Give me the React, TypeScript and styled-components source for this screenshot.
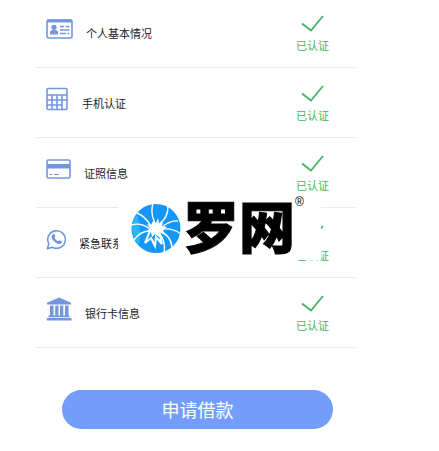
import React from "react";
import styled, { createGlobalStyle } from "styled-components";

const GlobalStyle = createGlobalStyle`
  body {
    margin: 0;
    background: #fff;
    font-family: "Noto Sans CJK SC", "Noto Sans", sans-serif;
  }
`;

const Page = styled.main`
  position: relative;
  padding: 0 84px 20px 36px;
  overflow: hidden;
`;

const List = styled.ul`
  list-style: none;
  margin: -2px 0 0;
  padding: 0;
`;

const Row = styled.li`
  display: flex;
  align-items: center;
  box-sizing: border-box;
  min-height: 70px;
  padding: 0 26px 0 10px;
  border-bottom: 1px solid #e9e9e9;
`;

const Icon = styled.svg<{ $width: number }>`
  flex: none;
  width: ${(p) => p.$width}px;
  height: 24px;
  margin: 0 13px 8px 0;
  color: #7397df;
`;

const Label = styled.span`
  flex: 1;
  font-size: 11px;
  line-height: 16px;
  color: #222;
  white-space: nowrap;
`;

const Status = styled.div`
  display: flex;
  flex-direction: column;
  align-items: center;
  gap: 5px;
  padding-top: 2px;
  font-size: 11px;
  line-height: 16px;
  color: #43b562;
`;

const Tick = styled.svg`
  width: 24px;
  height: 17px;
`;

const Submit = styled.button`
  display: block;
  width: calc(100% - 48px);
  height: 39px;
  margin: 42px 22px 0 26px;
  padding: 0;
  border: 0;
  border-radius: 20px;
  background: #729dfb;
  color: #fff;
  font: 400 18px/39px "Noto Sans CJK SC", sans-serif;
  cursor: pointer;
`;

const Watermark = styled.div`
  position: absolute;
  top: 196px;
  left: 118px;
  display: flex;
  box-sizing: border-box;
  width: 203px;
  height: 64px;
  padding: 7px 0 0 13px;
  background: #fff;
  color: #000;
`;

const Emblem = styled.svg`
  flex: none;
  width: 50px;
  height: 51px;
`;

const Brand = styled.strong`
  margin-left: 2px;
  font-size: 56px;
  line-height: 42px;
  font-weight: 900;
  -webkit-text-stroke: 1px #000;
  white-space: nowrap;
`;

const Registered = styled.span`
  margin-top: -9px;
  font: 400 12px/16px "Liberation Sans", sans-serif;
`;

const stroke = { fill: "none", stroke: "currentColor", strokeWidth: 1.6 };

const items = [
  {
    label: "个人基本情况",
    width: 27,
    art: (
      <>
        <rect x="1" y="3" width="25" height="18" rx="1.5" {...stroke} />
        <path d="M1 2.5h25v3H1z" fill="currentColor" />
        <circle cx="8" cy="10.3" r="2.6" fill="currentColor" />
        <path d="M4 17.5v-2.2c0-1.5 1-2.4 2.4-2.4h3.2c1.4 0 2.4.9 2.4 2.4v2.2z" fill="currentColor" />
        <path d="M14 9.5h4M19.5 9.5h4M14 13h9.5M14 16.5h6M21.5 16.5h2" {...stroke} />
      </>
    ),
  },
  {
    label: "手机认证",
    width: 23,
    art: (
      <>
        <rect x="1" y="1.5" width="20" height="21" rx="1.2" {...stroke} />
        <path d="M1 8h20M1 13h15M1 18h15M6 8v14.5M11 8v14.5M16 8v14.5M16 13h5" {...stroke} />
      </>
    ),
  },
  {
    label: "证照信息",
    width: 25,
    art: (
      <>
        <rect x="1" y="3" width="23" height="18" rx="1.5" {...stroke} />
        <path d="M1 7h23v4.5H1z" fill="currentColor" />
        <path d="M3.5 17.5h3M8 17.5h5" {...stroke} strokeWidth={1.2} />
      </>
    ),
  },
  {
    label: "紧急联系人",
    width: 20,
    art: (
      <>
        <path d="M1.3 21.7l1.5-5A8.8 8.8 0 1 1 6.2 20.2z" {...stroke} strokeLinejoin="round" />
        <path
          d="M7 7.2c.6-.5 1.3-.4 1.6.2l.8 1.9c.1.4-.6 1.1-.8 1.4.8 1.7 2 2.8 3.7 3.5.4-.4.9-1.2 1.4-1l2 1c.6.3.2 1.5-.3 2-1.1 1-2.7.9-4.3.2-2.600-1.1-4.600-3.200-5.300-5.300-.5-1.5-.1-3 1.200-3.900z"
          fill="currentColor"
        />
      </>
    ),
  },
  {
    label: "银行卡信息",
    width: 26,
    art: (
      <path
        d="M13 .5L25 5.8V7.5H1V5.8zM4 8.5h3.5v10H4zM9.2 8.5h3.3v10H9.2zM14 8.5h3.3v10H14zM19 8.5h3.5v10H19zM2.5 18.5h21v1.8h-21zM.8 21h24.700v2.5H.8z"
        fill="currentColor"
      />
    ),
  },
];

export default function App() {
  return (
    <Page>
      <GlobalStyle />
      <List>
        {items.map((item) => (
          <Row key={item.label}>
            <Icon $width={item.width} viewBox={`0 0 ${item.width} 24`} aria-hidden="true">
              {item.art}
            </Icon>
            <Label>{item.label}</Label>
            <Status>
              <Tick viewBox="0 0 24 17" aria-hidden="true">
                <path d="M1 8.5L10 15.5 22 1" {...stroke} strokeWidth={1.8} />
              </Tick>
              已认证
            </Status>
          </Row>
        ))}
      </List>
      <Submit type="button">申请借款</Submit>
      <Watermark>
        <Emblem viewBox="0 0 50 51" aria-hidden="true">
          <circle cx="25" cy="25.5" r="24.5" fill="#1597fa" />
          <path d="M6 11a24 24 0 0 0 2 31q3-13-2-31z" fill="#28b6f5" />
          <path
            d="M22 18l3 2 2-5 1 5 4-1-1 4 5 1-4 3 2 4-5-1-1 4-4-3-3 3-1-5-4-1 3-3-3-4 4 1z"
            fill="#fff"
          />
          <g fill="none" stroke="#fff" strokeWidth="1.4">
            <path d="M24 20Q19 11 22 0M29 20Q37 15 37 3M32 23Q41 17 47 18M32 26Q42 25 50 31M30 29Q40 33 41 44M20 23Q14 13 6 10M19 26Q10 19 0 22M19 28Q9 28 3 37M29 31Q35 40 33 50" />
            <path d="M19 28L14 40 20 35 24 43 25 34 31 41 28 29" strokeWidth="2" />
          </g>
        </Emblem>
        <Brand>罗网</Brand>
        <Registered>®</Registered>
      </Watermark>
    </Page>
  );
}
